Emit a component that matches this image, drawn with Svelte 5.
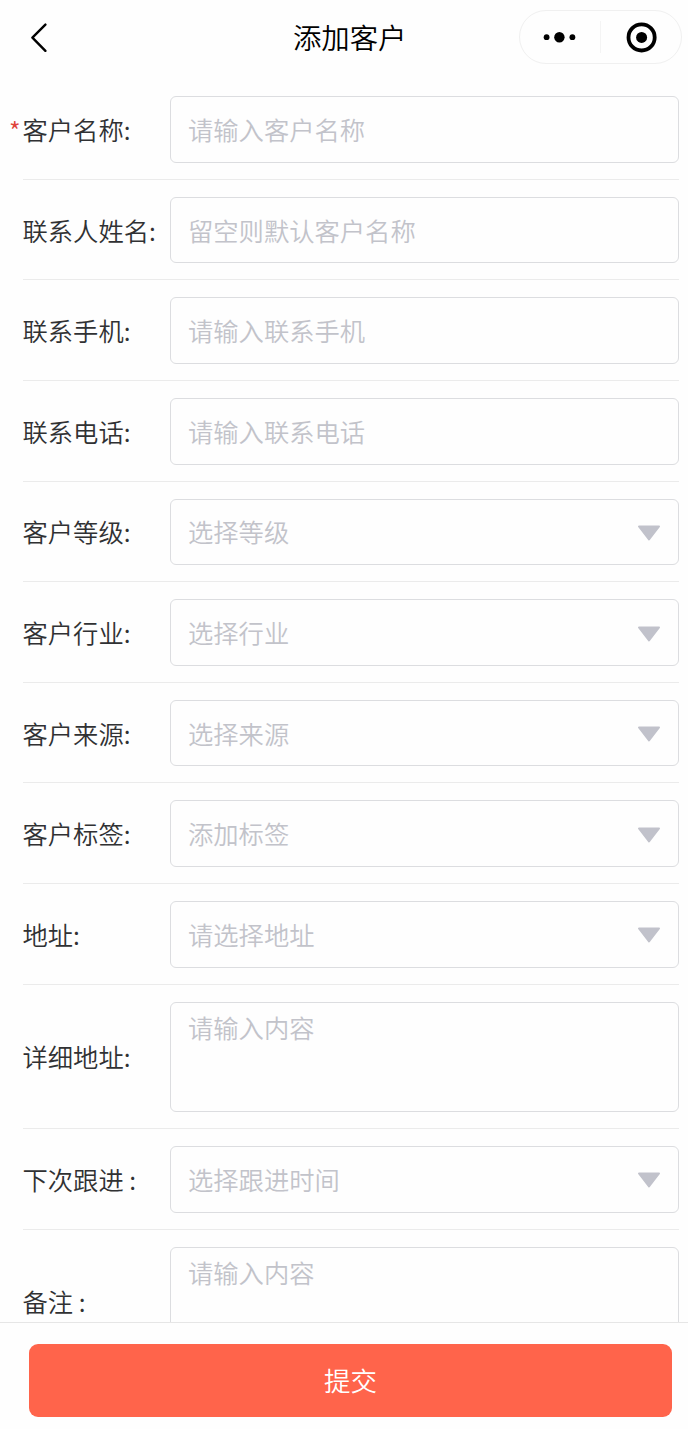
<script lang="ts">
  type Field = {
    label: string;
    placeholder: string;
    kind: 'input' | 'select' | 'textarea';
    required?: boolean;
  };

  const fields: Field[] = [
    { label: '客户名称:', placeholder: '请输入客户名称', kind: 'input', required: true },
    { label: '联系人姓名:', placeholder: '留空则默认客户名称', kind: 'input' },
    { label: '联系手机:', placeholder: '请输入联系手机', kind: 'input' },
    { label: '联系电话:', placeholder: '请输入联系电话', kind: 'input' },
    { label: '客户等级:', placeholder: '选择等级', kind: 'select' },
    { label: '客户行业:', placeholder: '选择行业', kind: 'select' },
    { label: '客户来源:', placeholder: '选择来源', kind: 'select' },
    { label: '客户标签:', placeholder: '添加标签', kind: 'select' },
    { label: '地址:', placeholder: '请选择地址', kind: 'select' },
    { label: '详细地址:', placeholder: '请输入内容', kind: 'textarea' },
    { label: '下次跟进 :', placeholder: '选择跟进时间', kind: 'select' },
    { label: '备注 :', placeholder: '请输入内容', kind: 'textarea' }
  ];

  let values: string[] = $state(fields.map(() => ''));
</script>

<div class="page">
  <header class="navbar">
    <button type="button" class="back" aria-label="返回">
      <svg width="18" height="30" viewBox="0 0 18 30">
        <path d="M16.4 2.6 L3.4 15.6 L16.4 28.8" fill="none" stroke="#000" stroke-width="2.4" stroke-linecap="round" stroke-linejoin="round" />
      </svg>
    </button>
    <h1 class="title">添加客户</h1>
    <div class="capsule">
      <button type="button" class="capsule-btn" aria-label="更多">
        <svg width="34" height="32" viewBox="0 0 34 32">
          <circle cx="3.6" cy="16.2" r="2.9" />
          <circle cx="16.4" cy="16.2" r="5.2" />
          <circle cx="29.4" cy="16.2" r="2.9" />
        </svg>
      </button>
      <span class="capsule-line"></span>
      <button type="button" class="capsule-btn" aria-label="关闭">
        <svg width="32" height="32" viewBox="0 0 32 32">
          <circle cx="16.6" cy="16.4" r="13.1" fill="none" stroke="#000" stroke-width="3.8" />
          <circle cx="16.6" cy="16.4" r="5.5" />
        </svg>
      </button>
    </div>
  </header>

  <main class="form">
    {#each fields as field, i}
      <div class="row" class:tall={field.kind === 'textarea'}>
        <label class="label" for="field-{i}">
          {#if field.required}<span class="star">*</span>{/if}{field.label}
        </label>
        {#if field.kind === 'input'}
          <input id="field-{i}" class="control" placeholder={field.placeholder} bind:value={values[i]} />
        {:else if field.kind === 'textarea'}
          <textarea id="field-{i}" class="control" placeholder={field.placeholder} bind:value={values[i]}></textarea>
        {:else}
          <button type="button" id="field-{i}" class="control select">
            <span>{values[i] || field.placeholder}</span>
            <svg width="24" height="17" viewBox="0 0 24 17">
              <path d="M2 1.5 H22 L12 14.5 Z" fill="#c1c2cb" stroke="#c1c2cb" stroke-width="2" stroke-linejoin="round" />
            </svg>
          </button>
        {/if}
      </div>
    {/each}
  </main>

  <footer class="footer">
    <button type="button" class="submit">提交</button>
  </footer>
</div>

<style>
  :global(body) {
    margin: 0;
    background: #fefefe;
  }

  .page {
    height: 1429px;
    display: flex;
    flex-direction: column;
    overflow: hidden;
    background: #fefefe;
    font-family: 'Noto Sans CJK SC DemiLight', 'Noto Sans CJK SC', sans-serif;
    font-size: 25.3px;
    color: #303133;
  }

  button,
  input,
  textarea {
    font: inherit;
    color: inherit;
    margin: 0;
    padding: 0;
    border: none;
    background: none;
    box-sizing: border-box;
  }

  .navbar {
    flex: none;
    height: 79.2px;
    box-sizing: border-box;
    padding: 10px 5.6px 15.2px 29px;
    display: grid;
    grid-template-columns: 163px 1fr 163px;
    align-items: center;
  }

  .back {
    display: flex;
    justify-self: start;
  }

  .title {
    margin: 0;
    padding-bottom: 1px;
    font-size: 28.4px;
    line-height: 40px;
    font-weight: 400;
    color: #000;
    text-align: center;
    transform: translateX(-6px);
  }

  .capsule {
    height: 54px;
    box-sizing: border-box;
    border: 1px solid #f0f0f0;
    border-radius: 27px;
    display: flex;
    align-items: center;
  }

  .capsule-btn {
    flex: 1;
    display: flex;
    justify-content: center;
  }

  .capsule-line {
    width: 1px;
    height: 32px;
    background: #f4f4f4;
  }

  .form {
    flex: 1;
    min-height: 0;
    overflow: hidden;
    padding: 0 9px 0 22.5px;
  }

  .row {
    height: 100.62px;
    box-sizing: border-box;
    padding: 17px 0 16px;
    display: flex;
    align-items: center;
    border-bottom: 1px solid #ebebeb;
  }

  .row.tall {
    height: 144.4px;
  }

  .label {
    position: relative;
    flex: none;
    width: 147px;
    padding-bottom: 1px;
    line-height: 36px;
    white-space: nowrap;
  }

  /* hangs in the left margin so labels stay aligned */
  .star {
    position: absolute;
    left: -13.5px;
    top: 1px;
    font-size: 25.2px;
    color: #e0433a;
  }

  .control {
    flex: 1;
    min-width: 0;
    height: 100%;
    padding: 0 17.5px 1px;
    border: 1px solid #dcdde0;
    border-radius: 6px;
    resize: none;
    outline: none;
  }

  textarea.control {
    padding-top: 7px;
    line-height: 35px;
  }

  .control::placeholder {
    color: #c2c3ca;
    opacity: 1;
  }

  .select {
    display: flex;
    align-items: center;
    justify-content: space-between;
    color: #c2c3ca;
  }

  .select svg {
    margin-top: 4px;
  }

  .footer {
    flex: none;
    height: 107px;
    box-sizing: border-box;
    padding: 21px 16px 12px 29px;
    border-top: 1px solid #e6e6e6;
  }

  .submit {
    display: block;
    width: 100%;
    height: 73px;
    padding-bottom: 2px;
    border-radius: 9px;
    background: #ff644b;
    color: #fff;
    font-size: 26.5px;
  }
</style>
